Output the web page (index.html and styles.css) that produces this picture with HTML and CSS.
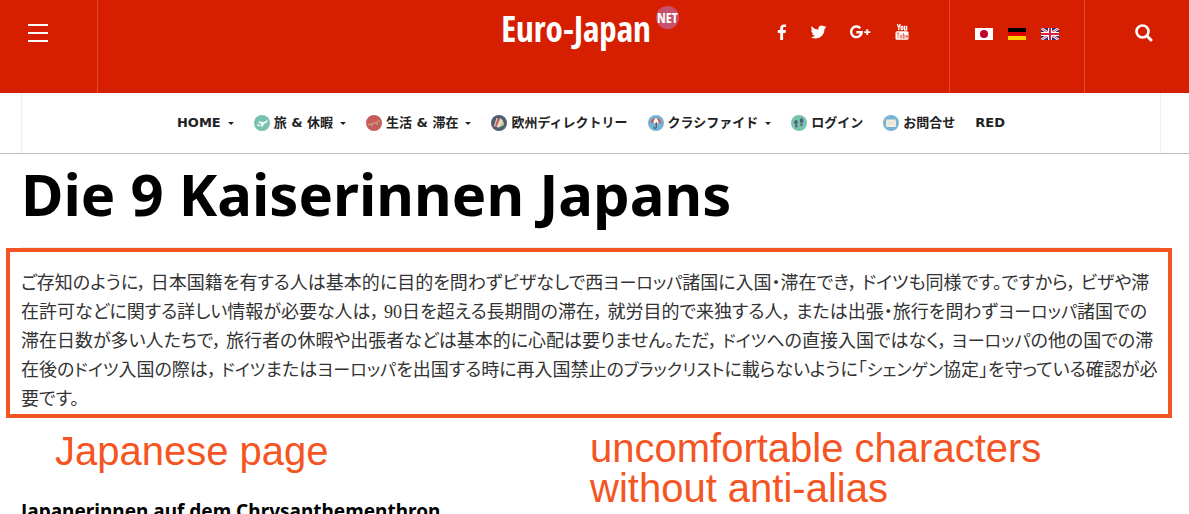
FILE: index.html
```html
<!DOCTYPE html>
<html lang="ja">
<head>
    <meta charset="UTF-8">
    <meta name="viewport" content="width=device-width, initial-scale=1.0">
    <title>Die 9 Kaiserinnen Japans</title>
    <link rel="stylesheet" href="styles.css">
</head>
<body>
    <header class="header">
        <div class="header-left">
            <button class="menu-btn" aria-label="Menu"><span></span><span></span><span></span></button>
        </div>
        <a class="logo" href="#">Euro-Japan<span class="logo-net">NET</span></a>
        <div class="header-right">
            <div class="social">
                <a href="#" aria-label="Facebook">
                    <svg width="12" height="16" viewBox="1 0 12 16"><path fill="#fff" d="M12 .6v2.500h-1.500c-1.100 0-1.400.5-1.400 1.300v1.700h2.800l-.4 2.800H9.100V16H6.200V8.900H3.800V6.100h2.400V4c0-2.400 1.500-3.600 3.600-3.600 1 0 1.900.1 2.200.2z"/></svg>
                </a>
                <a href="#" aria-label="Twitter">
                    <svg width="16" height="16" viewBox="0 0 16 16"><path fill="#fff" d="M16 3.500c-.5.7-1 1.200-1.600 1.600.2 4.500-3.200 9.400-9 9.400-1.900 0-3.600-.5-5-1.400 1.700.2 3.400-.3 4.700-1.300-1.400 0-2.600-1-3-2.300.5.1 1 .1 1.400 0C2.300 9.200 1.200 7.900 1.200 6.300c.5.3.9.4 1.500.4C1.200 5.700.8 3.800 1.700 2.300c1.600 2 4 3.300 6.700 3.400C7.900 3.600 9.500 1.500 11.700 1.500c.9 0 1.800.4 2.400 1 .7-.1 1.400-.4 2-.8-.2.8-.7 1.400-1.400 1.800.7-.1 1.300-.2 1.900-.5z"/></svg>
                </a>
                <a href="#" aria-label="Google Plus">
                    <svg width="22" height="16" viewBox="0 0 22 16"><path fill="none" stroke="#fff" stroke-width="2.400" d="M11.300 4.200A5.300 5.300 0 1 0 12.700 8.300H7.400"/><path fill="#fff" d="M17.300 5.200h1.900v2h2v1.900h-2v2h-1.900v-2h-2V7.200h2z"/></svg>
                </a>
                <a href="#" aria-label="YouTube">
                    <svg width="16" height="16" viewBox="0 0 16 16"><rect x="1.500" y="7.300" width="13" height="8.500" rx="1.500" fill="#fff"/><g fill="none" stroke="#fff" stroke-width="1.300"><path d="M3.300 0l1.500 3.500L6.300 0M4.800 3.300V6.300"/><rect x="7.100" y="2.300" width="1.800" height="3.400" rx=".8"/><path d="M10.600 1.700v3.800c0 .8 1 .6 1.900-.3M12.600 1.700v4.600"/></g><path stroke="#d61f00" stroke-width=".6" fill="none" d="M2.600 9h2.800M4 9v5.400M6.300 10.500v3c0 .8 1 .6 1.400 0M7.900 10.500v4M9.400 8.800v5.500c1.300.2 1.500-.3 1.500-1.800s-.4-2-1.500-1.500M13.700 13.300c-.3 1.300-1.600 1-1.600-.8s1.600-2 1.600 0h-1.600"/></svg>
                </a>
            </div>
            <div class="languages">
                <a href="#" aria-label="日本語">
                    <svg width="18" height="12" viewBox="0 0 18 12"><path fill="#fff" d="M0 0h18v12H0z"/><circle cx="9" cy="6" r="4" fill="#bc0029"/></svg>
                </a>
                <a href="#" aria-label="Deutsch">
                    <svg width="18" height="12" viewBox="0 0 18 12"><path d="M0 0h18v4H0z"/><path fill="#d00" d="M0 4h18v4H0z"/><path fill="#ffce00" d="M0 8h18v4H0z"/></svg>
                </a>
                <a href="#" aria-label="English">
                    <svg width="18" height="12" viewBox="0 0 18 12"><path fill="#1f2f7d" d="M0 0h18v12H0z"/><path stroke="#fff" stroke-width="2.600" d="M0 0l18 12M18 0L0 12"/><path stroke="#d4213d" stroke-width=".9" d="M0 0l18 12M18 0L0 12"/><path stroke="#fff" stroke-width="4" d="M9 0v12M0 6h18"/><path stroke="#d4213d" stroke-width="2" d="M9 0v12M0 6h18"/></svg>
                </a>
            </div>
            <div class="search">
                <button aria-label="Search">
                    <svg width="18" height="18" viewBox="0 0 18 18"><circle cx="7.500" cy="7.500" r="6" fill="none" stroke="#fff" stroke-width="2.600"/><path stroke="#fff" stroke-width="3" stroke-linecap="round" d="M12 12l4 4"/></svg>
                </button>
            </div>
        </div>
    </header>

    <nav class="navbar">
        <ul class="nav-list">
            <li><a class="has-sub" href="#">HOME</a></li>
            <li><a class="has-sub" href="#">
                <svg width="16" height="16" viewBox="0 0 16 16"><circle cx="8" cy="8" r="8" fill="#76c2af"/><path fill="#fff" d="M2.800 9.200l1.700.1 1 .9 1.900-1.100-3.600-2 1.300-.5 4.700.7 2.400-1.600c1-.5 1.900-.2 1.500.5-.5.9-2.300 1.800-3.500 2.500l-2 3.300-1.100.4.7-2.700-2.700 1.600c-1 .2-2-1.300-2.300-2.100z"/></svg>
                旅 &amp; 休暇</a></li>
            <li><a class="has-sub" href="#">
                <svg width="16" height="16" viewBox="0 0 16 16"><circle cx="8" cy="8" r="8" fill="#c75c5c"/><path fill="none" stroke="#e0995e" stroke-width="1.300" stroke-linecap="round" d="M2.500 9.700l2-.5 6-1.600 2.700-1.900"/><circle cx="5.800" cy="10.400" r="1" fill="#77b3d4"/><circle cx="11" cy="8.900" r="1" fill="#77b3d4"/></svg>
                生活 &amp; 滞在</a></li>
            <li><a href="#">
                <svg width="16" height="16" viewBox="0 0 16 16"><circle cx="8" cy="8" r="8" fill="#4f5d73"/><path fill="#76c2af" d="M7 12L12.500 8.500l.8 1.800L8 12.500z"/><path fill="#f5cf87" d="M5.500 12L11 4.500l2 3.800L8 12.500z"/><path fill="#e0e0d1" d="M5 12L9 3l2.600 2.200L7.500 12z"/><path fill="#c75c5c" d="M3.300 11.500L6 3l3 1-3.600 8.300z"/><path stroke="#fff" stroke-width=".8" d="M6 3L3.400 11.500"/></svg>
                欧州ディレクトリー</a></li>
            <li><a class="has-sub" href="#">
                <svg width="16" height="16" viewBox="0 0 16 16"><circle cx="8" cy="8" r="8" fill="#77b3d4"/><path fill="#c75c5c" d="M2.500 8.500a5.500 5.800 0 0 1 11 0l-1.800-.8-1.800.8L8 7.700l-1.900.8-1.800-.8z"/><path fill="#fff" d="M5.500 8.100C5.500 6 6.500 3.500 8 2.700c1.500.8 2.500 3.300 2.500 5.400l-.7.4L8 7.700l-1.900.8z"/><path fill="none" stroke="#4f5d73" stroke-width="1.200" stroke-linecap="round" d="M8.300 7.500v4.800c0 1.600-2.300 1.600-2.300 0"/></svg>
                クラシファイド</a></li>
            <li><a href="#">
                <svg width="16" height="16" viewBox="0 0 16 16"><circle cx="8" cy="8" r="8" fill="#76c2af"/><g fill="#4f5d73"><ellipse cx="5" cy="7.300" rx="1.700" ry="2.400"/><path d="M4 10.300l2.200-.3c.5 1.200.3 2.500-.6 2.600-.9.2-1.500-1-1.600-2.300z"/><ellipse cx="10.600" cy="5.700" rx="1.700" ry="2.400"/><path d="M9.500 8.400l2.200.3c-.1 1.400-.8 2.500-1.700 2.300-.8-.2-.9-1.400-.5-2.600z"/></g></svg>
                ログイン</a></li>
            <li><a href="#">
                <svg width="16" height="16" viewBox="0 0 16 16"><circle cx="8" cy="8" r="8" fill="#77b3d4"/><rect x="3" y="4.500" width="10" height="7.500" rx=".8" fill="#f1eee2"/><path fill="none" stroke="#d6d1bd" stroke-width=".7" d="M3.300 5l4.700 4 4.700-4M3.300 11.600l3-3M12.700 11.600l-3-3"/></svg>
                お問合せ</a></li>
            <li><a href="#">RED</a></li>
        </ul>
    </nav>

    <main class="article">
        <h1>Die 9 Kaiserinnen Japans</h1>
        <p class="intro">ご存知のように， 日本国籍を有する人は基本的に目的を問わずビザなしで西<span class="kata">ヨーロッパ</span>諸国に入国・滞在でき， ドイツも同様です。ですから， ビザや滞<br>在許可などに関する詳しい情報が必要な人は， 90日を超える長期間の滞在， 就労目的で来独する人， または出張・旅行を問わず<span class="kata">ヨーロッパ</span>諸国での<br>滞在日数が多い人たちで， 旅行者の休暇や出張者などは基本的に心配は要りません。ただ， <span class="kata">ドイツ</span>への直接入国ではなく， <span class="kata">ヨーロッパ</span>の他の国での滞<br>在後の<span class="kata">ドイツ</span>入国の際は， <span class="kata">ドイツ</span>または<span class="kata">ヨーロッパ</span>を出国する時に再入国禁止の<span class="kata">ブラックリスト</span>に載らないように「<span class="kata">シェンゲン</span>協定」を守っている確認が必<br>要です。</p>
        <!-- notes written over the page -->
        <div class="notes">
            <div class="note-page">Japanese page</div>
            <div>uncomfortable characters<br>without anti-alias</div>
        </div>
        <h3>Japanerinnen auf dem Chrysanthementhron</h3>
    </main>
</body>
</html>
```
FILE: styles.css
```css
* {
    box-sizing: border-box;
}
body {
    margin: 0;
    background-color: #fff;
    color: #222;
    font-family: "Noto Sans", "Noto Sans CJK JP", sans-serif;
}
a {
    color: inherit;
    text-decoration: none;
}
button {
    padding: 0;
    border: none;
    background: none;
    cursor: pointer;
}
svg {
    display: block;
}

/* header */
.header {
    display: grid;
    grid-template-columns: 1fr auto 1fr;
    height: 93px;
    background-color: #d61f00;
    color: #fff;
}
.header-left {
    display: flex;
    align-items: flex-start;
    width: 98px;
    padding: 24px 28px;
    border-right: 1px solid #e04a33;
}
.menu-btn {
    display: flex;
    flex-direction: column;
    gap: 6px;
    width: 20px;
}
.menu-btn span {
    height: 2px;
    background-color: #fff;
}
.logo {
    display: flex;
    align-items: flex-start;
    gap: 5px;
    padding: 6px 9px 0 0;
    font: bold 35px/46px "Liberation Sans Narrow", "Open Sans Condensed", "Liberation Sans", sans-serif;
}
.logo-net {
    width: 23px;
    height: 23px;
    border-radius: 50%;
    background-color: #c8506c;
    font-size: 14px;
    line-height: 23px;
    text-align: center;
}
.header-right {
    display: flex;
    justify-content: flex-end;
}
.social {
    display: flex;
    gap: 23px;
    padding: 24px 39px 0 0;
}
.languages {
    display: flex;
    gap: 15px;
    padding: 28px 25px 0;
    border-left: 1px solid #e04a33;
    border-right: 1px solid #e04a33;
}
.search {
    width: 104px;
    padding: 24px 0 0 50px;
}

/* navigation */
.navbar {
    padding: 0 28px 0 21px;
    border-bottom: 1px solid #bbb;
}
.nav-list {
    display: flex;
    justify-content: center;
    align-items: center;
    gap: 20px;
    height: 60px;
    margin: 0;
    padding: 0;
    border-left: 1px solid #eee;
    border-right: 1px solid #eee;
    list-style: none;
    font-family: "DejaVu Sans", "Noto Sans CJK JP", sans-serif;
    font-size: 13px;
    font-weight: bold;
    line-height: 20px;
    white-space: nowrap;
}
.nav-list a {
    display: flex;
    align-items: center;
    gap: 4px;
}
.has-sub::after {
    content: "";
    margin-left: 3px;
    border-top: 3px solid #222;
    border-left: 3px solid transparent;
    border-right: 3px solid transparent;
}

/* article */
.article {
    position: relative;
    padding: 0 28px 0 21px;
    color: #000;
}
h1 {
    margin: 0;
    padding-bottom: 13px;
    border-bottom: 1px solid #eee;
    font-size: 58px;
    line-height: 80px;
}
.intro {
    margin: 0 -11px 0 -15px;
    padding: 17px 0 0 11px;
    border: 4px solid #f45523;
    color: #333;
    font-family: "Liberation Serif", "Noto Sans CJK JP", serif;
    font-size: 18px;
    font-feature-settings: "palt";
    line-height: 29px;
    white-space: nowrap;
}
.kata {
    font-size: 17px;
}
.notes {
    position: absolute;
    top: 274px;
    left: 55px;
    right: 64px;
    display: grid;
    grid-template-columns: 1fr 1fr;
    color: #f45523;
    font: 40px/40px "Liberation Sans", sans-serif;
}
.note-page {
    padding-top: 3px;
}
h3 {
    margin: 83px 0 0;
    font-size: 19px;
    line-height: 20px;
}
```
